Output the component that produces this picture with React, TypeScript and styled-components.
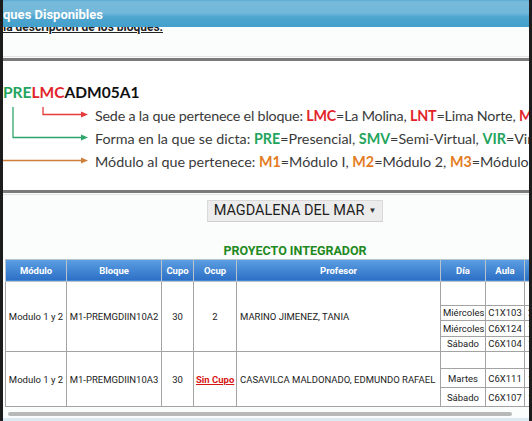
import React from "react";
import styled, { createGlobalStyle } from "styled-components";

const Global = createGlobalStyle`
  html, body { margin: 0; padding: 0; background: #1c1c1c; }
  body { font-family: Roboto, "Liberation Sans", sans-serif; }
`;

const Frame = styled.div`
  position: relative;
  margin: 0 3px;
  width: 526px;
  height: 421px;
  overflow: hidden;
  background: #fbfcfc;
`;

const TopBar = styled.header`
  position: absolute;
  top: 0;
  left: 0;
  right: 0;
  height: 27px;
  z-index: 2;
  display: flex;
  align-items: center;
  background: linear-gradient(
    to bottom,
    #5aa9d4 0px,
    #77bbdb 2px,
    #72b8da 13px,
    #4ea5cf 17px,
    #42a0cc 27px
  );
  color: #fff;
  font: bold 13px Roboto, "Liberation Sans", sans-serif;
  padding-top: 1px;
  box-sizing: border-box;
`;

const Intro = styled.p`
  margin: 0;
  padding-top: 19.5px;
  font: bold 12px/14px Roboto, "Liberation Sans", sans-serif;
  color: #222;
  text-decoration: underline;
  white-space: nowrap;
`;

const Divider = styled.div<{ $mt: number }>`
  margin-top: ${(p) => p.$mt}px;
  height: 1px;
  background: #e3e5e5;
`;

const Figure = styled.figure`
  margin: 1px 0 0;
  border-top: 3px solid #7b7b7b;
  border-bottom: 3px solid #7b7b7b;
  background: #fff;
  padding: 22px 0 17px;
  font-family: Lato, "Open Sans", sans-serif;
  white-space: nowrap;
`;

const Code = styled.div`
  font-weight: bold;
  font-size: 15.5px;
  line-height: 18px;
  color: #111;
`;

const Colored = styled.span<{ $c: string }>`
  color: ${(p) => p.$c};
  font-weight: bold;
`;

const Legend = styled.div`
  margin-top: 2.5px;
  display: grid;
  grid-template-columns: 92px 600px;
  grid-template-rows: repeat(3, 23px);
`;

const Connectors = styled.svg`
  grid-column: 1;
  grid-row: 1 / span 3;
  display: block;
`;

const LegendLine = styled.div<{ $ls?: number }>`
  grid-column: 2;
  font-size: 14.3px;
  line-height: 23px;
  color: #3a3a3a;
  letter-spacing: ${(p) => p.$ls ?? 0}px;
`;

const Lower = styled.div`
  margin-top: 1px;
  overflow: hidden;
`;

const Wide = styled.div`
  width: 584px;
  display: flex;
  flex-direction: column;
  align-items: center;
`;

const SelectBox = styled.div`
  margin-top: 4px;
  height: 22px;
  box-sizing: border-box;
  display: inline-flex;
  align-items: center;
  gap: 4px;
  padding: 0 6px;
  background: #ececec;
  border: 1px solid #dadada;
  border-bottom-color: #cfcfcf;
  font: 14.5px Roboto, "Liberation Sans", sans-serif;
  color: #1e1e1e;
`;

const Caret = styled.span`
  font-size: 8px;
  color: #333;
`;

const Title = styled.h3`
  margin: 21px 0 0;
  font: bold 12.5px/16px Roboto, "Liberation Sans", sans-serif;
  color: #1e8a1e;
`;

const Table = styled.table`
  align-self: flex-start;
  width: 582px;
  margin: 0 0 0 2px;
  border-collapse: collapse;
  font: 9.5px Roboto, "Liberation Sans", sans-serif;
  color: #222;
  table-layout: fixed;
`;

const Col = styled.col<{ $w: number }>`
  width: ${(p) => p.$w}px;
`;

const Th = styled.th`
  height: 22px;
  padding: 0;
  box-sizing: border-box;
  background: linear-gradient(to bottom, #5d9fe2, #2c6fc6);
  color: #fff;
  font-weight: bold;
  font-size: 9.5px;
  border: 1px solid #b9c3cc;
  text-align: center;
  white-space: nowrap;
  overflow: hidden;
`;

const Td = styled.td<{ $align?: string; $h?: number }>`
  border: 1px solid #a3a3a3;
  padding: ${(p) => (p.$align === "left" ? "0 0 0 3px" : "0 2px")};
  text-align: ${(p) => p.$align || "center"};
  vertical-align: middle;
  white-space: nowrap;
  overflow: hidden;
  height: ${(p) => (p.$h ? `${p.$h}px` : "auto")};
  box-sizing: border-box;
  background: #fff;
`;

const SinCupo = styled.a`
  color: #d81414;
  font-weight: bold;
  text-decoration: underline;
`;

const ScrollTrack = styled.div`
  margin-top: 5px;
  padding-left: 4.5px;
  height: 4px;
`;

const ScrollThumb = styled.div`
  width: 504px;
  height: 3.5px;
  border-radius: 2px;
  background: #b8b8b8;
`;

const BottomStrip = styled.div`
  margin-top: 2px;
  height: 3px;
  background: #dbeaf1;
`;

type Session = { dia: string; aula: string; hora: string };
type Row = {
  modulo: string;
  bloque: string;
  cupo: string;
  ocup: string | null;
  profesor: string;
  firstH: number;
  subH: number;
  sessions: Session[];
};

const rows: Row[] = [
  {
    modulo: "Modulo 1 y 2",
    bloque: "M1-PREMGDIIN10A2",
    cupo: "30",
    ocup: "2",
    profesor: "MARINO JIMENEZ, TANIA",
    firstH: 24,
    subH: 15.5,
    sessions: [
      { dia: "Miércoles", aula: "C1X103", hora: "20:00 - 22:00" },
      { dia: "Miércoles", aula: "C6X124", hora: "18:00 - 20:00" },
      { dia: "Sábado", aula: "C6X104", hora: "14:00 - 16:00" },
    ],
  },
  {
    modulo: "Modulo 1 y 2",
    bloque: "M1-PREMGDIIN10A3",
    cupo: "30",
    ocup: null,
    profesor: "CASAVILCA MALDONADO, EDMUNDO RAFAEL",
    firstH: 17,
    subH: 19,
    sessions: [
      { dia: "Martes", aula: "C6X111", hora: "18:00 - 20:00" },
      { dia: "Sábado", aula: "C6X107", hora: "10:00 - 12:00" },
    ],
  },
];

const headers: [string, number][] = [
  ["Módulo", 61],
  ["Bloque", 95],
  ["Cupo", 32],
  ["Ocup", 43],
  ["Profesor", 204],
  ["Día", 45],
  ["Aula", 39],
  ["Horario", 63],
];

const RED = "#e2232a";
const GREEN = "#22a45c";
const ORANGE = "#e47b22";

export default function App() {
  return (
    <>
      <Global />
      <Frame>
        <TopBar>ques Disponibles</TopBar>
        <Intro>la descripcion de los bloques:</Intro>
        <Divider $mt={22.5} />
        <Figure>
          <Code>
            <Colored $c={GREEN}>PRE</Colored>
            <Colored $c={RED}>LMC</Colored>ADM05A1
          </Code>
          <Legend>
            <Connectors width="92" height="69" viewBox="0 0 92 69">
              <g fill="none" strokeWidth="1.3">
                <path d="M40 3 V10.5 H79" stroke="#e53b3b" />
                <path d="M10 3 V33.5 H79" stroke="#2ea56a" />
                <path d="M0 56.5 H79" stroke="#cf7f3c" />
              </g>
              <polygon points="78,7.5 85,10.5 78,13.5" fill="#e53b3b" />
              <polygon points="78,30.5 85,33.5 78,36.5" fill="#2ea56a" />
              <polygon points="78,53.5 85,56.5 78,59.5" fill="#cf7f3c" />
            </Connectors>
            <LegendLine $ls={-0.2}>
              Sede a la que pertenece el bloque: <Colored $c={RED}>LMC</Colored>=La Molina,{" "}
              <Colored $c={RED}>LNT</Colored>=Lima Norte, <Colored $c={RED}>MO</Colored>
            </LegendLine>
            <LegendLine>
              Forma en la que se dicta: <Colored $c={GREEN}>PRE</Colored>=Presencial,{" "}
              <Colored $c={GREEN}>SMV</Colored>=Semi-Virtual, <Colored $c={GREEN}>VIR</Colored>=Virtual
            </LegendLine>
            <LegendLine>
              Módulo al que pertenece: <Colored $c={ORANGE}>M1</Colored>=Módulo I,{" "}
              <Colored $c={ORANGE}>M2</Colored>=Módulo 2, <Colored $c={ORANGE}>M3</Colored>=Módulo Exp
            </LegendLine>
          </Legend>
        </Figure>
        <Divider $mt={1} />
        <Lower>
          <Wide>
            <SelectBox>
              MAGDALENA DEL MAR <Caret>▼</Caret>
            </SelectBox>
            <Title>PROYECTO INTEGRADOR</Title>
            <Table>
              <colgroup>
                {headers.map(([h, w]) => (
                  <Col key={h} $w={w} />
                ))}
              </colgroup>
              <thead>
                <tr>
                  {headers.map(([h]) => (
                    <Th key={h}>{h}</Th>
                  ))}
                </tr>
              </thead>
              <tbody>
                {rows.map((r) => (
                  <React.Fragment key={r.bloque}>
                    <tr>
                      <Td rowSpan={r.sessions.length + 1}>{r.modulo}</Td>
                      <Td rowSpan={r.sessions.length + 1}>{r.bloque}</Td>
                      <Td rowSpan={r.sessions.length + 1}>{r.cupo}</Td>
                      <Td rowSpan={r.sessions.length + 1}>
                        {r.ocup ?? <SinCupo>Sin Cupo</SinCupo>}
                      </Td>
                      <Td rowSpan={r.sessions.length + 1} $align="left">
                        {r.profesor}
                      </Td>
                      <Td $h={r.firstH} />
                      <Td $h={r.firstH} />
                      <Td $h={r.firstH} />
                    </tr>
                    {r.sessions.map((s, i) => (
                      <tr key={i}>
                        <Td $h={r.subH}>{s.dia}</Td>
                        <Td $h={r.subH}>{s.aula}</Td>
                        <Td $h={r.subH} $align="left">
                          {s.hora}
                        </Td>
                      </tr>
                    ))}
                  </React.Fragment>
                ))}
              </tbody>
            </Table>
          </Wide>
        </Lower>
        <ScrollTrack>
          <ScrollThumb />
        </ScrollTrack>
        <BottomStrip />
      </Frame>
    </>
  );
}
